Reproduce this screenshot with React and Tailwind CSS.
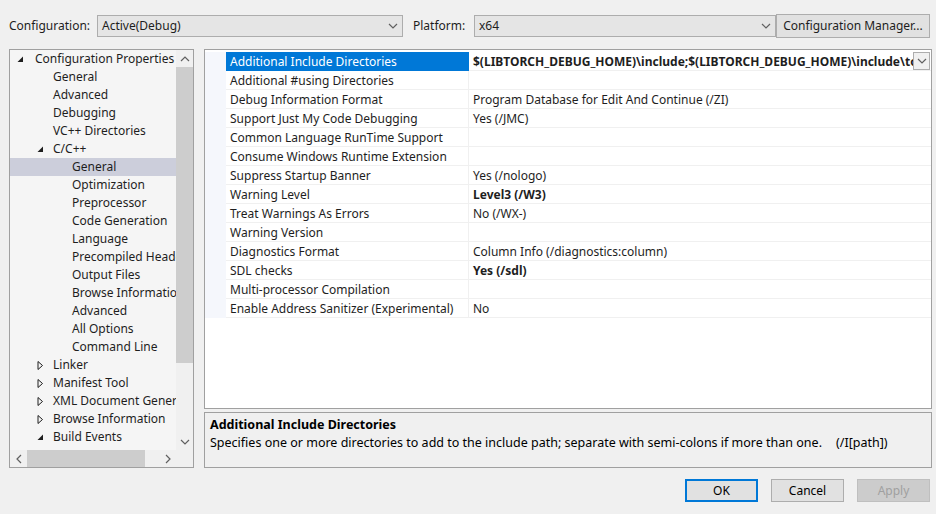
import React from "react";

const font = { fontFamily: '"Noto Sans", "Liberation Sans", sans-serif' };

const Chevron = ({ dir = "down", className = "" }) => {
  const d = {
    down: "M1 3 L5 7 L9 3",
    up: "M1 7 L5 3 L9 7",
    left: "M7 1 L3 5 L7 9",
    right: "M3 1 L7 5 L3 9",
  }[dir];
  return (
    <svg width="10" height="10" viewBox="0 0 10 10" className={className}>
      <path d={d} fill="none" stroke="currentColor" strokeWidth="1.2" />
    </svg>
  );
};

const Expanded = () => (
  <svg width="7" height="7" viewBox="0 0 7 7">
    <polygon points="6,0.5 6,6 0.5,6" fill="#1e1e1e" />
  </svg>
);

const Collapsed = () => (
  <svg width="7" height="9" viewBox="0 0 7 9">
    <polygon points="1,0.5 5.5,4.5 1,8.5" fill="none" stroke="#1e1e1e" strokeWidth="1" />
  </svg>
);

const tree = [
  { label: "Configuration Properties", level: 0, icon: "exp" },
  { label: "General", level: 1 },
  { label: "Advanced", level: 1 },
  { label: "Debugging", level: 1 },
  { label: "VC++ Directories", level: 1 },
  { label: "C/C++", level: 1, icon: "exp" },
  { label: "General", level: 2, selected: true },
  { label: "Optimization", level: 2 },
  { label: "Preprocessor", level: 2 },
  { label: "Code Generation", level: 2 },
  { label: "Language", level: 2 },
  { label: "Precompiled Headers", level: 2 },
  { label: "Output Files", level: 2 },
  { label: "Browse Information", level: 2 },
  { label: "Advanced", level: 2 },
  { label: "All Options", level: 2 },
  { label: "Command Line", level: 2 },
  { label: "Linker", level: 1, icon: "col" },
  { label: "Manifest Tool", level: 1, icon: "col" },
  { label: "XML Document Generator", level: 1, icon: "col" },
  { label: "Browse Information", level: 1, icon: "col" },
  { label: "Build Events", level: 1, icon: "exp" },
];

const indent = ["pl-[25px]", "pl-[43px]", "pl-[62px]"];
const iconPos = ["left-[7px]", "left-[27px]", "left-[46px]"];

const props = [
  ["Additional Include Directories", "$(LIBTORCH_DEBUG_HOME)\\include;$(LIBTORCH_DEBUG_HOME)\\include\\torch\\csrc\\api\\include;%(AdditionalIncludeDirectories)", true],
  ["Additional #using Directories", ""],
  ["Debug Information Format", "Program Database for Edit And Continue (/ZI)"],
  ["Support Just My Code Debugging", "Yes (/JMC)"],
  ["Common Language RunTime Support", ""],
  ["Consume Windows Runtime Extension", ""],
  ["Suppress Startup Banner", "Yes (/nologo)"],
  ["Warning Level", "Level3 (/W3)", true],
  ["Treat Warnings As Errors", "No (/WX-)"],
  ["Warning Version", ""],
  ["Diagnostics Format", "Column Info (/diagnostics:column)"],
  ["SDL checks", "Yes (/sdl)", true],
  ["Multi-processor Compilation", ""],
  ["Enable Address Sanitizer (Experimental)", "No"],
];

export default function App() {
  return (
    <div className="w-[936px] h-[514px] bg-[#f0f0f0] text-[12px] text-[#1e1e1e] overflow-hidden" style={font}>
      {/* top bar */}
      <div className="flex items-center h-[49px] pl-[9px] pt-[2px]">
        <span className="w-[88px]">Configuration:</span>
        <div className="w-[306px] h-[22px] border border-[#adadad] bg-[#e5e5e5] flex items-center pl-[4px] pr-[4px]">
          <span className="flex-1">Active(Debug)</span>
          <Chevron className="text-[#606060]" />
        </div>
        <span className="ml-[10px] w-[61px]">Platform:</span>
        <div className="w-[302px] h-[22px] border border-[#adadad] bg-[#e5e5e5] flex items-center pl-[4px] pr-[4px]">
          <span className="flex-1">x64</span>
          <Chevron className="text-[#606060]" />
        </div>
        <div className="w-[154px] h-[24px] border border-[#adadad] bg-[#e1e1e1] flex items-center justify-center">
          Configuration Manager...
        </div>
      </div>

      <div className="flex pl-[9px]">
        {/* tree */}
        <div className="w-[185px] h-[419px] border border-[#a0a0a0] bg-[#f5f5f5] flex flex-col">
          <div className="flex flex-1 min-h-0">
            <div className="flex-1 overflow-hidden">
              {tree.map((t, i) => (
                <div
                  key={i}
                  className={`relative h-[18px] leading-[18px] whitespace-nowrap ${indent[t.level]} ${t.selected ? "bg-[#cccedb]" : ""}`}
                >
                  {t.icon && (
                    <span className={`absolute top-0 h-[18px] flex items-center ${iconPos[t.level]}`}>
                      {t.icon === "exp" ? <Expanded /> : <Collapsed />}
                    </span>
                  )}
                  {t.label}
                </div>
              ))}
            </div>
            <div className="w-[17px] bg-[#f0f0f0] flex flex-col items-center">
              <div className="h-[17px] flex items-center justify-center text-[#606060]">
                <Chevron dir="up" />
              </div>
              <div className="w-[17px] h-[296px] bg-[#cdcdcd]" />
              <div className="flex-1" />
              <div className="h-[17px] flex items-center justify-center text-[#606060]">
                <Chevron dir="down" />
              </div>
            </div>
          </div>
          <div className="h-[17px] flex bg-[#f0f0f0]">
            <div className="w-[17px] flex items-center justify-center text-[#606060]">
              <Chevron dir="left" />
            </div>
            <div className="w-[118px] bg-[#cdcdcd]" />
            <div className="flex-1" />
            <div className="w-[17px] flex items-center justify-center text-[#606060]">
              <Chevron dir="right" />
            </div>
            <div className="w-[17px]" />
          </div>
        </div>

        {/* right column */}
        <div className="ml-[10px] w-[728px] flex flex-col">
          <div className="h-[360px] border border-[#a0a0a0] bg-white pt-[2px]">
            {props.map(([name, value, bold], i) => (
              <div key={i} className="flex h-[19px]">
                <div className="w-[21px] bg-[#f5f7fc]" />
                <div
                  className={`w-[243px] pl-[4px] leading-[20px] whitespace-nowrap overflow-hidden border-b border-r ${
                    i === 0 ? "bg-[#0078d7] text-white border-[#0078d7]" : "border-[#f0f0f0]"
                  }`}
                >
                  {name}
                </div>
                <div className="flex-1 flex min-w-0 border-b border-[#f0f0f0]">
                  <div className={`flex-1 pl-[4px] leading-[20px] whitespace-nowrap overflow-hidden ${bold ? "font-bold" : ""}`}>
                    {value}
                  </div>
                  {i === 0 && (
                    <div className="w-[17px] h-[18px] border border-[#adadad] bg-[#f0f0f0] flex items-center justify-center text-[#606060] mr-[1px]">
                      <Chevron />
                    </div>
                  )}
                </div>
              </div>
            ))}
          </div>
          <div className="mt-[3px] h-[56px] border border-[#a0a0a0] bg-[#f0f0f0] px-[5px] pt-[3px] leading-[18px] text-[12.5px] text-black">
            <div className="font-bold">Additional Include Directories</div>
            <div className="whitespace-nowrap">
              Specifies one or more directories to add to the include path; separate with semi-colons if more than one.
              <span className="ml-[14px]">(/I[path])</span>
            </div>
          </div>
        </div>
      </div>

      {/* buttons */}
      <div className="flex justify-end gap-[13px] pr-[6px] mt-[11px]">
        <div className="w-[73px] h-[23px] border-2 border-[#0078d7] bg-[#e1e1e1] flex items-center justify-center text-black">OK</div>
        <div className="w-[73px] h-[23px] border border-[#adadad] bg-[#e1e1e1] flex items-center justify-center text-black">Cancel</div>
        <div className="w-[73px] h-[23px] border border-[#bfbfbf] bg-[#cccccc] flex items-center justify-center text-[#a0a0a0]">Apply</div>
      </div>
    </div>
  );
}
